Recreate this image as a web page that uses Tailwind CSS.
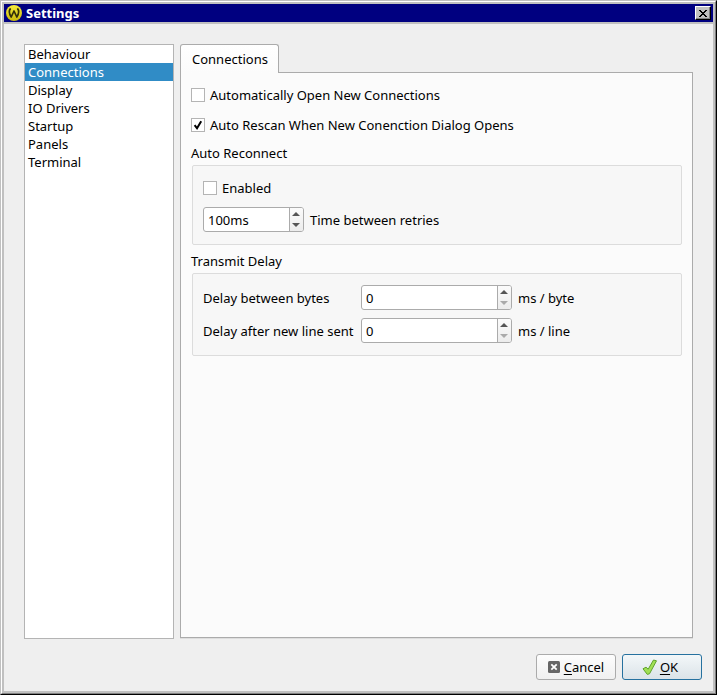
<!DOCTYPE html>
<html lang="en">
<head>
    <meta charset="UTF-8">
    <meta name="viewport" content="width=device-width, initial-scale=1.0">
    <title>Settings</title>
    <script src="https://cdn.jsdelivr.net/npm/@tailwindcss/browser@4"></script>
</head>

<body class="font-['Noto_Sans',sans-serif] text-[13px] leading-[18px] text-black">
<!-- Window frame -->
<div class="h-screen border border-t-[#c0c0c0] border-l-[#c0c0c0] border-r-black border-b-black">
<div class="h-full border border-t-white border-l-white border-r-[#808080] border-b-[#808080]">
<div class="h-full flex flex-col border-2 border-[#c0c0c0] bg-[#efefef]">

    <!-- Title Bar -->
    <header class="h-5 shrink-0 flex items-center gap-1 pl-[2px] pr-[2px] bg-[#000080] border-b-2 border-[#c0c0c0]">
        <svg class="w-4 h-4" viewBox="0 0 16 16">
            <defs>
                <linearGradient id="logo" x1="0" y1="0" x2="0" y2="1">
                    <stop offset="0" stop-color="#f8ee3c"/>
                    <stop offset="1" stop-color="#c9b80c"/>
                </linearGradient>
            </defs>
            <circle cx="8" cy="8" r="8" fill="url(#logo)"/>
            <path d="M4.6 3.4C2.8 5.5 3 8.6 5.2 12L8 6L10.8 12C13 8.6 13.2 5.5 11.4 3.4" fill="none" stroke="#33300a" stroke-width="1.7" stroke-linejoin="round"/>
        </svg>
        <h1 class="flex-1 font-bold text-white">Settings</h1>
        <button aria-label="Close" class="w-4 h-[14px] flex items-center justify-center bg-[#c0c0c0] border border-t-white border-l-white border-r-black border-b-black shadow-[inset_-1px_-1px_#808080]">
            <svg class="w-2 h-[7px]" viewBox="0 0 8 7" shape-rendering="crispEdges">
                <path d="M0 0h2v1h1v1h2v-1h1v-1h2v1h-1v1h-1v1h-1v1h1v1h1v1h1v1h-2v-1h-1v-1h-2v1h-1v1h-2v-1h1v-1h1v-1h1v-1h-1v-1h-1v-1h-1z"/>
            </svg>
        </button>
    </header>

    <div class="flex-1 min-h-0 flex flex-col gap-[15px] pt-5 pl-5 pr-[11px] pb-[11px]">
        <div class="flex-1 min-h-0 flex gap-[6px] pr-[9px]">
            <!-- Pages -->
            <nav class="w-[150px] shrink-0 bg-white border border-[#b4b4b4]">
                <ul id="pages">
                    <li><button class="block w-full px-[3px] text-left">Behaviour</button></li>
                    <li><button class="block w-full px-[3px] text-left bg-[#308cc6] text-white" aria-current="page">Connections</button></li>
                    <li><button class="block w-full px-[3px] text-left">Display</button></li>
                    <li><button class="block w-full px-[3px] text-left">IO Drivers</button></li>
                    <li><button class="block w-full px-[3px] text-left">Startup</button></li>
                    <li><button class="block w-full px-[3px] text-left">Panels</button></li>
                    <li><button class="block w-full px-[3px] text-left">Terminal</button></li>
                </ul>
            </nav>

            <!-- Tab + Panel -->
            <main class="flex-1 min-w-0 flex flex-col">
                <button class="relative z-10 self-start h-[29px] pl-[11px] pr-[10px] border border-b-0 border-[#ababab] rounded-t-[3px] bg-linear-to-b from-white to-[#fbfbfb]">Connections</button>
                <section class="flex-1 -mt-px mb-px px-[10px] pt-[13px] bg-[#fbfbfb] border border-[#ababab] shadow-[0_1px_#dedede]">
                    <label class="flex items-center gap-[5px] w-fit">
                        <input type="checkbox" class="appearance-none w-[14px] h-[14px] bg-white border border-[#b4b4b4]">
                        Automatically Open New Connections
                    </label>
                    <label class="flex items-center gap-[5px] w-fit mt-3">
                        <span class="grid">
                            <input type="checkbox" checked class="peer appearance-none col-start-1 row-start-1 w-[14px] h-[14px] bg-white border border-[#b4b4b4]">
                            <svg class="invisible peer-checked:visible col-start-1 row-start-1 w-[14px] h-[14px] pointer-events-none" viewBox="0 0 14 14">
                                <path d="M3.6 7.2L6 10.2L10.2 3.2" fill="none" stroke="#000" stroke-width="2"/>
                            </svg>
                        </span>
                        Auto Rescan When New Conenction Dialog Opens
                    </label>

                    <fieldset class="mt-[10px]">
                        <legend>Auto Reconnect</legend>
                        <div class="mt-[3px] ml-px h-20 px-[10px] pt-[13px] bg-[#f7f7f7] border border-[#dcdcdc] rounded-[2px]">
                            <label class="flex items-center gap-[5px] w-fit">
                                <input type="checkbox" class="appearance-none w-[14px] h-[14px] bg-white border border-[#b4b4b4]">
                                Enabled
                            </label>
                            <div class="flex items-center gap-[6px] mt-[10px]">
                                <div class="flex w-[101px] h-[25px] bg-white border border-[#ababab] rounded-[3px] overflow-hidden">
                                    <input id="retry" type="text" value="100ms" class="flex-1 min-w-0 pl-1 outline-none">
                                    <div class="flex flex-col w-[14px] pr-px border-l border-[#ababab] bg-linear-to-b from-[#fbfbfb] to-[#ececec]">
                                        <button aria-label="Increase" class="flex-1 flex items-end justify-center pb-1"><svg class="w-2 h-1" viewBox="0 0 8 4"><path d="M0 4L4 0L8 4z" fill="#555"/></svg></button>
                                        <button aria-label="Decrease" class="flex-1 flex items-start justify-center pt-[3px]"><svg class="w-2 h-1" viewBox="0 0 8 4"><path d="M0 0L4 4L8 0z" fill="#555"/></svg></button>
                                    </div>
                                </div>
                                <label for="retry">Time between retries</label>
                            </div>
                        </div>
                    </fieldset>

                    <fieldset class="mt-[7px]">
                        <legend>Transmit Delay</legend>
                        <div class="mt-[3px] ml-px px-[10px] pt-[11px] pb-3 bg-[#f7f7f7] border border-[#dcdcdc] rounded-[2px] grid grid-cols-[152px_151px_1fr] gap-x-[6px] gap-y-2 items-center">
                            <label for="byte-delay">Delay between bytes</label>
                            <div class="flex h-[25px] bg-white border border-[#ababab] rounded-[3px] overflow-hidden">
                                <input id="byte-delay" type="text" value="0" class="flex-1 min-w-0 pl-1 outline-none">
                                <div class="flex flex-col w-[14px] pr-px border-l border-[#ababab] bg-linear-to-b from-[#fbfbfb] to-[#ececec]">
                                    <button aria-label="Increase" class="flex-1 flex items-end justify-center pb-1"><svg class="w-2 h-1" viewBox="0 0 8 4"><path d="M0 4L4 0L8 4z" fill="#555"/></svg></button>
                                    <button aria-label="Decrease" class="flex-1 flex items-start justify-center pt-[3px]"><svg class="w-2 h-1" viewBox="0 0 8 4"><path d="M0 0L4 4L8 0z" fill="#aaa"/></svg></button>
                                </div>
                            </div>
                            <span>ms / byte</span>

                            <label for="line-delay">Delay after new line sent</label>
                            <div class="flex h-[25px] bg-white border border-[#ababab] rounded-[3px] overflow-hidden">
                                <input id="line-delay" type="text" value="0" class="flex-1 min-w-0 pl-1 outline-none">
                                <div class="flex flex-col w-[14px] pr-px border-l border-[#ababab] bg-linear-to-b from-[#fbfbfb] to-[#ececec]">
                                    <button aria-label="Increase" class="flex-1 flex items-end justify-center pb-1"><svg class="w-2 h-1" viewBox="0 0 8 4"><path d="M0 4L4 0L8 4z" fill="#555"/></svg></button>
                                    <button aria-label="Decrease" class="flex-1 flex items-start justify-center pt-[3px]"><svg class="w-2 h-1" viewBox="0 0 8 4"><path d="M0 0L4 4L8 0z" fill="#aaa"/></svg></button>
                                </div>
                            </div>
                            <span>ms / line</span>
                        </div>
                    </fieldset>
                </section>
            </main>
        </div>

        <!-- Dialog Buttons -->
        <footer class="flex justify-end gap-[6px]">
            <button class="w-20 h-[26px] flex items-center justify-center gap-1 border border-[#ababab] rounded-[3px] bg-linear-to-b from-[#fdfdfd] to-[#f0f0f0]">
                <svg class="w-3 h-3" viewBox="0 0 12 12">
                    <rect width="12" height="12" rx="1.5" fill="#666"/>
                    <path d="M3.3 3.3L8.7 8.7M8.7 3.3L3.3 8.7" stroke="#fff" stroke-width="1.8"/>
                </svg>
                <span><span class="underline underline-offset-2">C</span>ancel</span>
            </button>
            <button class="w-20 h-[26px] flex items-center justify-center gap-[2px] pr-1 border border-[#26719f] rounded-[3px] bg-linear-to-b from-[#f3f7f9] to-[#dbe3e8]">
                <svg class="w-4 h-4" viewBox="0 0 16 16">
                    <path d="M1 9.8L4 8.2L6.2 10.2L11.5 1L14.5 1.8L7.5 14.8L5.3 15.4z" fill="#a0e055" stroke="#5fa32c" stroke-linejoin="round"/>
                </svg>
                <span><span class="underline underline-offset-2">O</span>K</span>
            </button>
        </footer>
    </div>
</div>
</div>
</div>

<script>
    const pages = document.querySelectorAll('#pages button');

    // Switch the selected page
    pages.forEach((page) => {
        page.addEventListener('click', () => {
            pages.forEach((other) => {
                other.classList.remove('bg-[#308cc6]', 'text-white');
                other.removeAttribute('aria-current');
            });
            page.classList.add('bg-[#308cc6]', 'text-white');
            page.setAttribute('aria-current', 'page');
        });
    });
</script>
</body>
</html>
